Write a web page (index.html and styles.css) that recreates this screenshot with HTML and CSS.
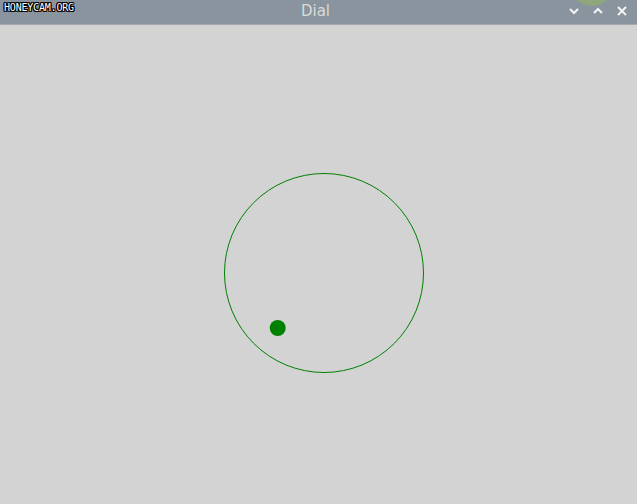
FILE: index.html
```html
<!DOCTYPE html>
<html lang="en">
<head>
    <meta charset="UTF-8">
    <title>Dial</title>
    <link rel="stylesheet" href="styles.css">
</head>
<body>
    <div class="window">
        <div class="titlebar">
            <span class="watermark">HONEYCAM.ORG</span>
            <span class="title">Dial</span>
            <div class="blob"></div>
            <div class="controls">
                <svg width="12" height="12" viewBox="0 0 12 12"><path d="M2 4 L6 8 L10 4" fill="none" stroke="#f4f4f4" stroke-width="2"/></svg>
                <svg width="12" height="12" viewBox="0 0 12 12"><path d="M2 8 L6 4 L10 8" fill="none" stroke="#f4f4f4" stroke-width="2"/></svg>
                <svg width="12" height="12" viewBox="0 0 12 12"><path d="M2 2 L10 10 M10 2 L2 10" fill="none" stroke="#f4f4f4" stroke-width="2"/></svg>
            </div>
        </div>
        <div class="content">
            <svg class="dial" width="637" height="479" viewBox="0 0 637 479">
                <circle cx="324" cy="248" r="99.5" fill="none" stroke="#008000" stroke-width="1"/>
                <circle cx="277.7" cy="303" r="8" fill="#008000"/>
            </svg>
        </div>
    </div>
</body>
</html>
```

FILE: styles.css
```css
body {
    margin: 0;
    font-family: "DejaVu Sans", sans-serif;
    background-color: #d3d3d3;
    overflow: hidden;
}
.window {
    width: 637px;
    height: 504px;
    display: flex;
    flex-direction: column;
}
.titlebar {
    position: relative;
    height: 24px;
    background-color: #8a949e;
    border-bottom: 1px solid #a3a9ae;
    display: flex;
    align-items: center;
    justify-content: center;
    overflow: hidden;
}
.watermark {
    position: absolute;
    left: 4px;
    top: 2px;
    font-family: "DejaVu Sans Mono", monospace;
    font-size: 10px;
    color: white;
    letter-spacing: -0.2px;
    text-shadow: 1px 0 0 #000, -1px 0 0 #000, 0 1px 0 #000, 0 -1px 0 #000,
                 1px 1px 0 #000, -1px -1px 0 #000, 1px -1px 0 #000, -1px 1px 0 #000;
}
.title {
    font-size: 15px;
    color: #d8dcd6;
    margin-left: -6px;
    margin-top: -2px;
}
.blob {
    position: absolute;
    left: 570px;
    top: -38px;
    width: 44px;
    height: 44px;
    border-radius: 50%;
    background-color: #8fa57a;
}
.controls {
    position: absolute;
    right: 9px;
    top: 5px;
    display: flex;
    gap: 12px;
}
.content {
    flex: 1;
}
.dial {
    display: block;
}
```
